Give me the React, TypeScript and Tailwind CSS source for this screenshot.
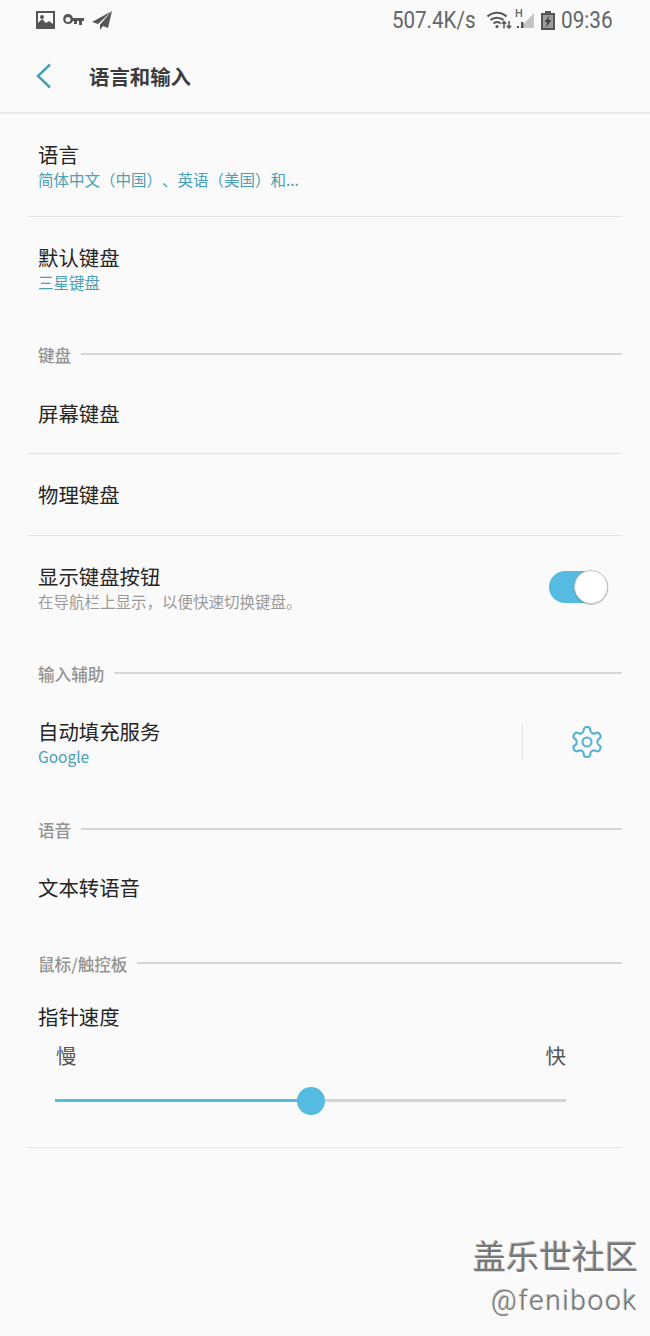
const font = '"Noto Sans CJK SC", Roboto, sans-serif';

function Row({ title, sub, subTone = "link", className = "" }: { title: string; sub?: string; subTone?: "link" | "gray"; className?: string }) {
  return (
    <div className={`flex flex-col justify-center pl-[38px] ${className}`}>
      <div className="mb-[2px] text-[20.4px] leading-[26px] text-[#252525]">{title}</div>
      {sub && (
        <div className={`text-[15.5px] leading-[20px] [text-spacing-trim:space-all] ${subTone === "link" ? "text-[#4a9fb5]" : "text-[#9a9a9a]"}`}>{sub}</div>
      )}
    </div>
  );
}

function Divider() {
  return <div className="mx-[28px] h-px bg-[#e2e2e2]" />;
}

function Section({ label }: { label: string }) {
  return (
    <div className="flex h-[20px] items-center gap-[10px] pl-[38px] pr-[28px]">
      <span className="mt-[2px] text-[16.6px] leading-[20px] font-medium text-[#939393]">{label}</span>
      <div className="h-[2px] flex-1 bg-[#d6d6d6]" />
    </div>
  );
}

function StatusBar() {
  return (
    <div className="flex h-[40px] items-center justify-between pl-[36px] pr-[38px]">
      <div className="flex items-center gap-[8px]">
        <svg width="19" height="18" viewBox="0 0 19 18">
          <path fillRule="evenodd" d="M0 0h19v18H0zM2 2v10l4-4 4 4 3-2 4 3V2z" fill="#555" />
          <circle cx="6" cy="6" r="2" fill="#555" />
        </svg>
        <svg width="21" height="12" viewBox="0 0 21 12">
          <path fillRule="evenodd" d="M5 0a5 5 0 0 1 4.8 4H21v3h-2v4h-3V7h-2v3h-3V7H9.800A5 5 0 1 1 5 0zm0 3a2.500 2.500 0 1 0 0 5 2.500 2.500 0 0 0 0-5z" fill="#555" />
        </svg>
        <svg width="20" height="19" viewBox="0 0 20 19">
          <path d="M20 0 0 11l6 2L20 0zM20 0 8 13.500V19l3-4 5 2z" fill="#555" />
        </svg>
      </div>
      <div className="flex items-center">
        <span className="w-[83px] origin-left scale-x-[0.855] whitespace-nowrap text-[24px] leading-[28px] text-[#666]" style={{ fontFamily: "Roboto, sans-serif" }}>507.4K/s</span>
        <svg className="ml-[12px]" width="25" height="18" viewBox="0 0 25 18" fill="none" stroke="#555">
          <path d="M.5 5.500C6 .5 14 .5 19.500 5.500" strokeWidth="2.200" />
          <path d="M3.500 9c3.500-3 9.500-3 13 0" strokeWidth="2.200" />
          <path d="M6.500 12.500c2-1.800 5-1.800 7 0" strokeWidth="2.200" />
          <circle cx="10" cy="15.500" r="1.600" fill="#555" stroke="none" />
          <path d="M17 17.500v-7M14.800 12.800l2.200-2.200 2.200 2.200M22 10v7M19.800 14.800l2.200 2.200 2.200-2.200" strokeWidth="1.500" />
        </svg>
        <div className="relative ml-[3px] h-[18px] w-[20px]">
          <svg width="20" height="18" viewBox="0 0 20 18" className="absolute inset-0">
            <path d="M19 2v15H5z" fill="#c4c4c4" />
            <path d="M2 17h2v-2H2zM6 17h2.500v-6H6z" fill="#555" />
          </svg>
          <span className="absolute left-0 top-[-3px] text-[11px] leading-[12px] font-medium text-[#666]" style={{ fontFamily: "Roboto, sans-serif" }}>H</span>
        </div>
        <svg className="ml-[6px]" width="14" height="19" viewBox="0 0 14 19">
          <path d="M4 0h6v2h4v17H0V2h4z" fill="#555" />
          <path d="M2 4h10v13H2z" fill="#9c9c9c" />
          <path d="M8.500 4.500 3.500 11H6l-1 5.500 5.500-7.500H7.500z" fill="#444" />
        </svg>
        <span className="ml-[6px] w-[51px] origin-left scale-x-[0.865] whitespace-nowrap text-[24px] leading-[28px] text-[#666]" style={{ fontFamily: "Roboto, sans-serif" }}>09:36</span>
      </div>
    </div>
  );
}

export default function App() {
  return (
    <div className="relative h-[1336px] w-[650px] overflow-hidden bg-[#fafafa]" style={{ fontFamily: font }}>
      <StatusBar />

      {/* header */}
      <div className="flex h-[74px] items-center border-b-2 border-[#e6e6e6] pl-[36px]">
        <svg width="16" height="26" viewBox="0 0 16 26" fill="none" stroke="#4a9fb5" strokeWidth="2.500">
          <path d="M14 1.500 2 13l12 11.500" />
        </svg>
        <span className="ml-[37px] text-[20.4px] leading-[28px] font-bold text-[#3c3c3c]">语言和输入</span>
      </div>

      <Row title="语言" sub="简体中文（中国）、英语（美国）和..." className="h-[102px]" />
      <Divider />
      <Row title="默认键盘" sub="三星键盘" className="h-[127px] pb-[25px]" />
      <Section label="键盘" />
      <Row title="屏幕键盘" className="h-[89px] pt-[11px]" />
      <Divider />
      <Row title="物理键盘" className="h-[81px]" />
      <Divider />

      <div className="flex h-[127px] items-center justify-between pb-[25px] pr-[42px]">
        <Row title="显示键盘按钮" sub="在导航栏上显示，以便快速切换键盘。" subTone="gray" />
        <div className="relative h-[32px] w-[59px] rounded-full bg-[#55bbe0]">
          <div className="absolute right-0 top-[-1px] h-[34px] w-[34px] rounded-full border border-[#c4c4c4] bg-white shadow-[0_1px_1px_rgba(0,0,0,0.2)]" />
        </div>
      </div>

      <Section label="输入辅助" />

      <div className="flex h-[136px] items-center justify-between pb-[18px] pr-[45px]">
        <Row title="自动填充服务" sub="Google" />
        <div className="flex items-center gap-[46px]">
          <div className="h-[35px] w-px bg-[#e2e2e2]" />
          <svg width="36" height="36" viewBox="0 0 24 24" fill="none" stroke="#55b3d3" strokeWidth="1.400" strokeLinecap="round" strokeLinejoin="round">
            <path d="M12.220 2h-.44a2 2 0 0 0-2 2v.18a2 2 0 0 1-1 1.730l-.43.25a2 2 0 0 1-2 0l-.15-.08a2 2 0 0 0-2.730.73l-.22.38a2 2 0 0 0 .73 2.730l.15.1a2 2 0 0 1 1 1.720v.51a2 2 0 0 1-1 1.740l-.15.09a2 2 0 0 0-.73 2.730l.22.38a2 2 0 0 0 2.730.73l.15-.08a2 2 0 0 1 2 0l.43.25a2 2 0 0 1 1 1.730V20a2 2 0 0 0 2 2h.44a2 2 0 0 0 2-2v-.18a2 2 0 0 1 1-1.730l.43-.25a2 2 0 0 1 2 0l.15.08a2 2 0 0 0 2.730-.73l.22-.39a2 2 0 0 0-.73-2.730l-.15-.08a2 2 0 0 1-1-1.740v-.5a2 2 0 0 1 1-1.740l.15-.09a2 2 0 0 0 .73-2.730l-.22-.38a2 2 0 0 0-2.730-.73l-.15.08a2 2 0 0 1-2 0l-.43-.25a2 2 0 0 1-1-1.730V4a2 2 0 0 0-2-2z" />
            <circle cx="12" cy="12" r="3" />
          </svg>
        </div>
      </div>

      <Section label="语音" />
      <Row title="文本转语音" className="h-[114px] pb-[16px]" />
      <Section label="鼠标/触控板" />

      {/* pointer speed */}
      <div className="pl-[38px] pt-[30px]">
        <div className="mb-[2px] text-[20.4px] leading-[26px] text-[#252525]">指针速度</div>
      </div>
      <div className="flex justify-between pl-[56px] pr-[84px] pt-[11px] text-[20.4px] leading-[26px] text-[#555]">
        <span>慢</span>
        <span>快</span>
      </div>
      <div className="relative ml-[55px] mt-[19px] h-[28px] w-[511px]">
        <div className="absolute inset-x-0 top-[12px] h-[3px] bg-[#d4d4d4]" />
        <div className="absolute left-0 top-[12px] h-[3px] w-[256px] bg-[#55bbe0]" />
        <div className="absolute left-[242px] top-0 h-[28px] w-[28px] rounded-full bg-[#55bbe0]" />
      </div>
      <div className="mx-[28px] mt-[32px] h-px bg-[#e2e2e2]" />

      {/* watermark */}
      <div className="absolute right-[12px] top-[1236px] flex flex-col items-end text-[#777] [text-shadow:1px_1px_0_#fff,-1px_-1px_0_#bbb]">
        <span className="text-[33px] leading-[38px]">盖乐世社区</span>
        <span className="mt-[8px] text-[28px] leading-[38px] font-light tracking-[1.700px]" style={{ fontFamily: "Roboto, sans-serif" }}>@fenibook</span>
      </div>
    </div>
  );
}
